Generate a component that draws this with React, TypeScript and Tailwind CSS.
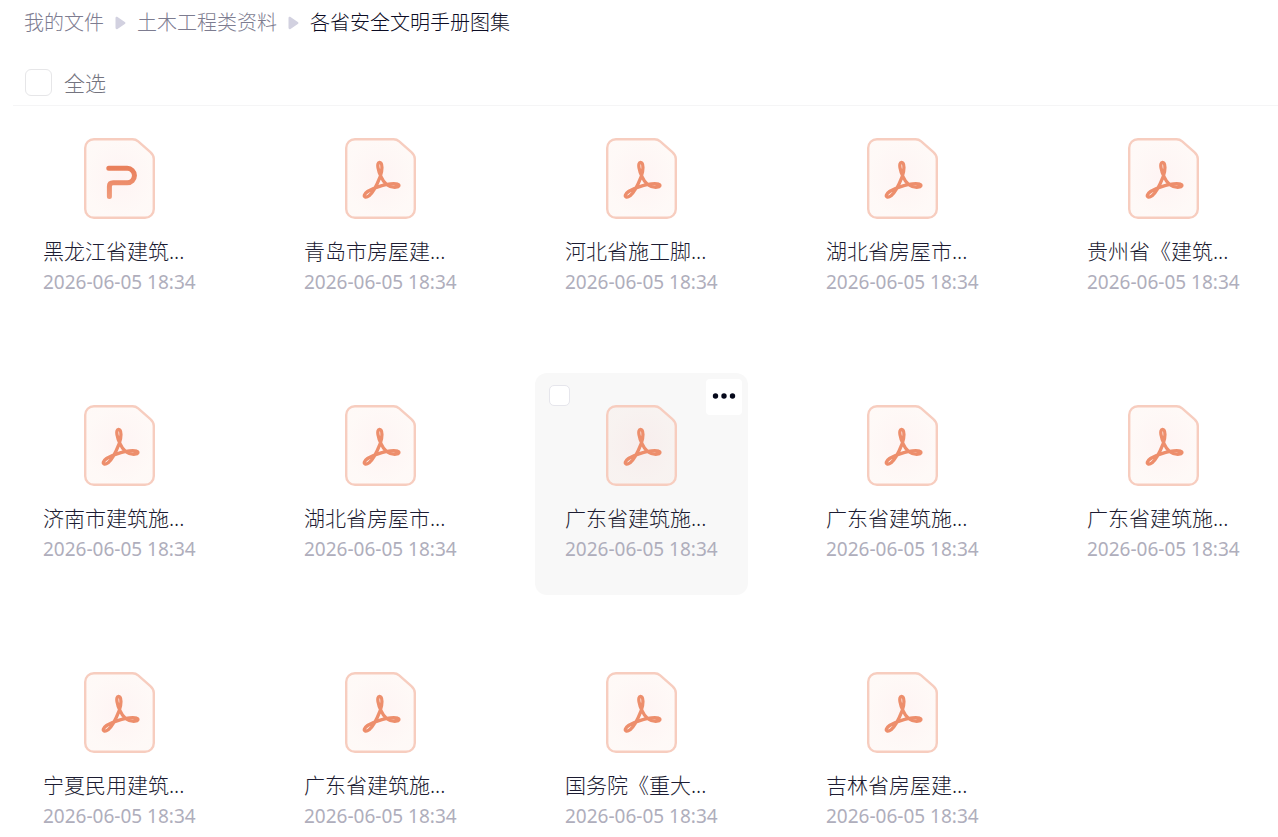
import React, { useState } from 'react';

interface IFile {
  name: string;
  date: string;
  type: 'ppt' | 'pdf';
}

const date = '2026-06-05 18:34';

const files: IFile[] = [
  { name: '黑龙江省建筑...', date, type: 'ppt' },
  { name: '青岛市房屋建...', date, type: 'pdf' },
  { name: '河北省施工脚...', date, type: 'pdf' },
  { name: '湖北省房屋市...', date, type: 'pdf' },
  { name: '贵州省《建筑...', date, type: 'pdf' },
  { name: '济南市建筑施...', date, type: 'pdf' },
  { name: '湖北省房屋市...', date, type: 'pdf' },
  { name: '广东省建筑施...', date, type: 'pdf' },
  { name: '广东省建筑施...', date, type: 'pdf' },
  { name: '广东省建筑施...', date, type: 'pdf' },
  { name: '宁夏民用建筑...', date, type: 'pdf' },
  { name: '广东省建筑施...', date, type: 'pdf' },
  { name: '国务院《重大...', date, type: 'pdf' },
  { name: '吉林省房屋建...', date, type: 'pdf' },
];

const Arrow: React.FC = () => (
  <svg width="11" height="14" viewBox="0 0 11 14" fill="#d2d1e0" aria-hidden="true">
    <path d="M0.5 2.2C0.5 1 1.5 0.5 2.5 1L9.8 6C10.7 6.6 10.7 7.4 9.8 8L2.5 13C1.5 13.5 0.5 13 0.5 11.8Z" />
  </svg>
);

const FileIcon: React.FC<{ type: IFile['type'] }> = ({ type }) => (
  <svg width="71" height="81" viewBox="0 0 71 81" fill="none" aria-hidden="true">
    <defs>
      <radialGradient id="paper">
        <stop offset="0" stopColor="#f2504e" stopOpacity="0.065" />
        <stop offset="1" stopColor="#f28a5e" stopOpacity="0.05" />
      </radialGradient>
      <linearGradient id="ink" x1="0" y1="0" x2="0" y2="1">
        <stop offset="0" stopColor="#e9805c" />
        <stop offset="1" stopColor="#f09a7a" />
      </linearGradient>
    </defs>
    <path
      d="M10 1.2H48.5C50.8 1.2 52.6 1.9 54.2 3.3L66.4 14.2C68.6 16.2 69.8 18.2 69.8 21V71C69.8 76 66 79.8 61 79.8H10C5 79.8 1.2 76 1.2 71V10C1.2 5 5 1.2 10 1.2Z"
      fill="url(#paper)"
      stroke="#f7cdbf"
      strokeWidth="2.4"
    />
    {type === 'ppt' ? (
      <path
        d="M24.8 30.3H43.2A7.1 7.1 0 0 1 43.2 44.8H29.2C26.6 44.8 25.4 46 25.4 48.4V58.4"
        stroke="url(#ink)"
        strokeWidth="5"
        strokeLinecap="round"
        strokeLinejoin="round"
      />
    ) : (
      <path
        d="M36 38.6C33.4 33.5 31.2 24.8 34.4 24.4C38 24.4 37.3 33 35.2 38.6C32.2 46.2 28.6 54.4 24 57.8C21.2 60 18.6 59.2 19.4 57C20.6 53.8 26 51.2 33 48.9C40.5 46.5 49.2 45.2 52.6 46.2C55 47 54 49 51 49.2C43 49.8 38.6 44.6 36 38.6Z"
        stroke="#ed8e6c"
        strokeWidth="3.3"
        strokeLinecap="round"
        strokeLinejoin="round"
      />
    )}
  </svg>
);

const FileCard: React.FC<{ file: IFile; active: boolean; onEnter: () => void }> = ({ file, active, onEnter }) => (
  <li
    onMouseEnter={onEnter}
    className={`relative flex flex-col rounded-xl px-[30px] pt-8 pb-[31px] ${active ? 'bg-[#f8f8f8]' : ''}`}
  >
    {active && (
      <>
        <input
          type="checkbox"
          aria-label={file.name}
          className="absolute top-3 left-3.5 size-[21px] appearance-none rounded-[5px] border border-[#e6e6ec] bg-white checked:bg-[#ed8e6c]"
        />
        <button
          type="button"
          aria-label="更多"
          className="absolute top-1.5 right-1.5 flex size-9 items-center justify-center rounded bg-white"
        >
          <svg width="24" height="6" viewBox="0 0 24 6" fill="#05081a" className="mb-0.5">
            <circle cx="3.5" cy="3" r="2.7" />
            <circle cx="12" cy="3" r="2.7" />
            <circle cx="20.5" cy="3" r="2.7" />
          </svg>
        </button>
      </>
    )}
    <div className="mb-[18px] flex justify-center">
      <FileIcon type={file.type} />
    </div>
    <p className="mb-0.5 truncate text-[21px] leading-[28px] text-[#1c1c32]">{file.name}</p>
    <p className="text-[19px] leading-[30px] font-normal whitespace-nowrap text-[#afaebc]">{file.date}</p>
  </li>
);

const App: React.FC = () => {
  const [active, setActive] = useState(7);

  return (
    <main className="min-h-screen bg-white pl-[13px] font-['Noto_Sans','Noto_Sans_CJK_SC',sans-serif] font-light">
      <nav className="flex h-[46px] items-center gap-[11px] pl-[11px] text-[20px] text-[#7d7c90]">
        <a href="#files">我的文件</a>
        <Arrow />
        <a href="#civil">土木工程类资料</a>
        <Arrow />
        <span className="text-[#0c0c24]">各省安全文明手册图集</span>
      </nav>

      <div className="flex h-[60px] items-center border-b border-[#f5f5f6] pt-[14px] pl-3">
        <input
          id="select-all"
          type="checkbox"
          className="size-[27px] appearance-none rounded-md border border-[#e6e6e8] bg-white checked:bg-[#ed8e6c]"
        />
        <label htmlFor="select-all" className="pl-3 text-[21px] leading-[28px] text-[#74747f]">
          全选
        </label>
      </div>

      <ul className="grid grid-cols-[repeat(auto-fill,213px)] gap-x-12 gap-y-[45px]">
        {files.map((file, index) => (
          <FileCard key={index} file={file} active={index === active} onEnter={() => setActive(index)} />
        ))}
      </ul>
    </main>
  );
};

export default App;
